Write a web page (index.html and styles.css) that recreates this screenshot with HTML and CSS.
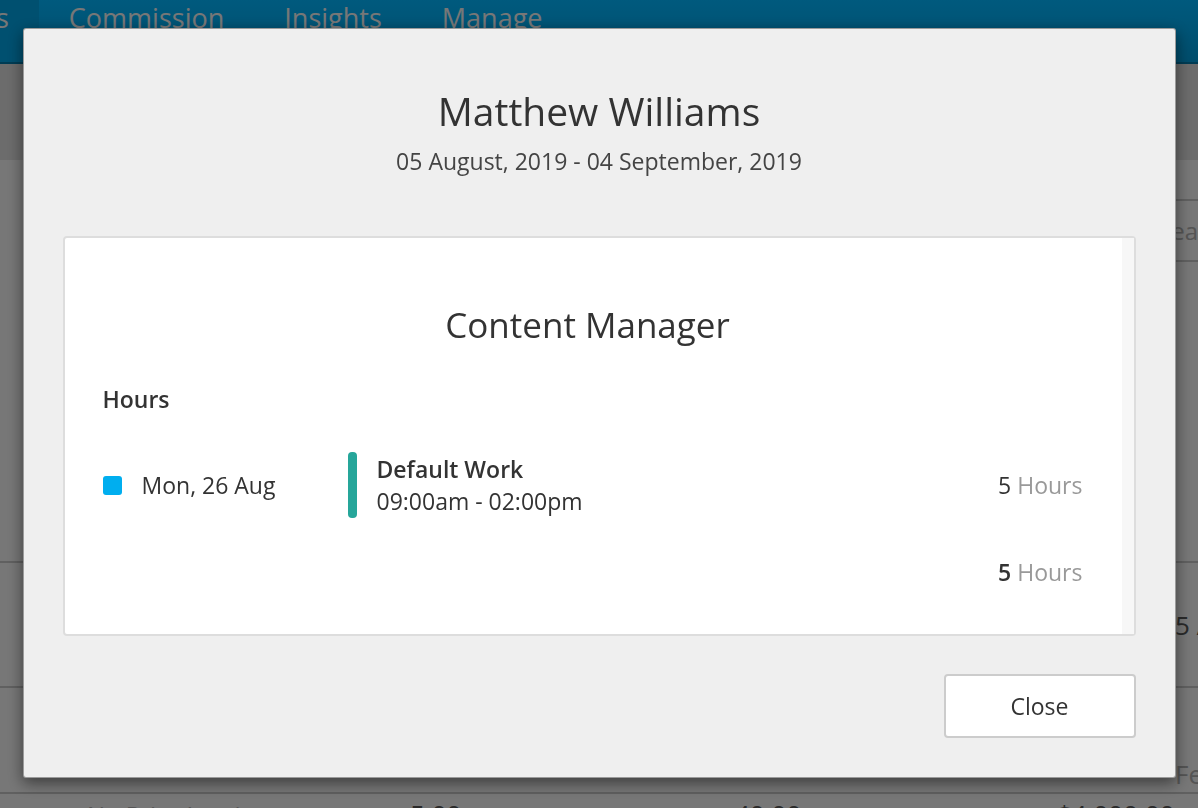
FILE: index.html
```html
<!DOCTYPE html>
<html lang="en">
<head>
  <meta charset="UTF-8" />
  <meta name="viewport" content="width=device-width, initial-scale=1.0"/>
  <title>Staff Hours | Matthew Williams</title>
  <link rel="stylesheet" href="styles.css">
</head>
<body>

  <!-- Page behind the dialog -->
  <nav class="topnav">
    <a class="tab active" href="#">Clients</a>
    <a class="tab" href="#">Commission</a>
    <a class="tab" href="#">Insights</a>
    <a class="tab" href="#">Manage</a>
  </nav>

  <div class="page-head"></div>

  <div class="toolbar">
    <div class="search-box">Search</div>
  </div>

  <div class="report">
    <div class="report-row tall"></div>
    <div class="report-row mid">
      <span class="cell c6 strong">5 / 40</span>
    </div>
    <div class="report-row short">
      <span class="cell c6 muted">Fees</span>
    </div>
    <div class="report-row plain">
      <span class="cell c2 muted">No Prior Invoices</span>
      <span class="cell c3 strong">5.00 <small>H</small></span>
      <span class="cell c4 strong">40.00 <small>H</small></span>
      <span class="cell c5 strong">$4,000.00</span>
    </div>
  </div>

  <!-- Hours dialog -->
  <div class="overlay">
    <div class="modal">
      <div class="modal-head">
        <h2 class="staff-name">Matthew Williams</h2>
        <p class="period">05 August, 2019 - 04 September, 2019</p>
      </div>

      <div class="role-card">
        <div class="role-body">
          <h3 class="role-title">Content Manager</h3>
          <h4 class="section-label">Hours</h4>

          <div class="shift-row">
            <div class="shift-date"><span class="dot"></span>Mon, 26 Aug</div>
            <div class="shift-info">
              <span class="bar"></span>
              <div>
                <div class="shift-name">Default Work</div>
                <div class="shift-time">09:00am - 02:00pm</div>
              </div>
            </div>
            <div class="shift-hours"><span class="num">5</span> Hours</div>
          </div>

          <div class="total-row"><span class="num bold">5</span> Hours</div>
        </div>
        <div class="scroll-track"></div>
      </div>

      <div class="modal-foot">
        <button class="btn-close">Close</button>
      </div>
    </div>
  </div>

</body>
</html>
```

FILE: styles.css
```css
body {
  font-family: "Open Sans", "Liberation Sans", sans-serif;
  margin: 0;
  background: #eeeeee;
  color: #333;
  overflow: hidden;
  height: 808px;
}

/* Page behind */
.topnav {
  height: 62px;
  background: linear-gradient(#00b4fc, #009ad8);
  border-bottom: 2px solid #0078a8;
  display: flex;
  margin-left: -106px;
}

.tab {
  font-size: 27px;
  line-height: 36px;
  color: #eeeeee;
  text-decoration: none;
  padding: 0 30px;
}

.tab.active {
  background: #00a0e0;
}

.page-head {
  height: 96px;
  background: #d8d8d8;
}

.toolbar {
  height: 103px;
  display: flex;
  justify-content: flex-end;
  align-items: flex-end;
}

.search-box {
  width: 120px;
  height: 59px;
  margin-right: -80px;
  margin-bottom: 1px;
  border-top: 2px solid #c0c0c0;
  border-bottom: 2px solid #c0c0c0;
  padding-left: 39px;
  font-size: 24px;
  line-height: 59px;
  color: #aaaaaa;
}

.report-row {
  display: grid;
  grid-template-columns: 87px 323px 325px 322px 118px 200px;
  align-items: center;
  border-bottom: 2px solid #c0c0c0;
  white-space: nowrap;
}

.report-row.tall { height: 298px; }
.report-row.mid { height: 123px; }
.report-row.short { height: 104px; align-items: end; }
.report-row.plain { border: none; padding-top: 2px; }

.cell { font-size: 26px; }
.c2 { grid-column: 2; font-size: 24px; }
.c3 { grid-column: 3; }
.c4 { grid-column: 4; }
.c5 { grid-column: 5; }
.c6 { grid-column: 6; }
.strong { color: #555; }
.muted { color: #aaaaaa; }
.cell small { font-size: 14px; color: #aaa; }

/* Dialog */
.overlay {
  position: fixed;
  top: 0;
  left: 0;
  right: 0;
  bottom: 0;
  background: rgba(0, 0, 0, 0.5);
  display: flex;
  justify-content: center;
  align-items: flex-start;
  padding-top: 28px;
}

.modal {
  width: 1073px;
  background: #efefef;
  border: 1px solid rgba(0, 0, 0, 0.35);
  border-radius: 3px;
  box-shadow: 0 5px 15px rgba(0, 0, 0, 0.5);
  padding: 0 39px 39px;
}

.modal-head {
  text-align: center;
  padding-top: 56px;
  padding-bottom: 59px;
}

.staff-name {
  font-size: 39px;
  line-height: 52px;
  font-weight: 400;
  margin: 0;
  color: #333;
}

.period {
  font-size: 23px;
  line-height: 31px;
  margin: 9px 0 0;
  color: #444;
}

.role-card {
  background: #fff;
  border: 2px solid #dddddd;
  border-radius: 4px;
  display: flex;
}

.role-body {
  flex: 1;
  padding: 63px 39px 46px 38px;
}

.scroll-track {
  width: 12px;
  background: #f7f7f7;
}

.role-title {
  text-align: center;
  font-size: 35px;
  line-height: 48px;
  font-weight: 400;
  margin: 0 0 35px;
  padding-right: 10px;
  color: #333;
}

.section-label {
  font-size: 23px;
  line-height: 31px;
  font-weight: 600;
  margin: 0 0 37px;
  color: #333;
}

.shift-row {
  display: flex;
  align-items: center;
  font-size: 23px;
}

.shift-date {
  width: 245px;
  display: flex;
  align-items: center;
  color: #333;
}

.dot {
  width: 19px;
  height: 19px;
  border-radius: 3px;
  background: #00aeef;
  margin-right: 20px;
}

.shift-info {
  flex: 1;
  display: flex;
  align-items: center;
}

.bar {
  width: 9px;
  height: 66px;
  border-radius: 4px;
  background: #26a69a;
  margin-right: 20px;
}

.shift-name {
  font-weight: 600;
  line-height: 32px;
}

.shift-time {
  line-height: 32px;
}

.shift-hours, .total-row {
  font-size: 23px;
  line-height: 31px;
  color: #999;
  text-align: right;
}

.total-row {
  margin-top: 39px;
}

.num {
  color: #333;
}

.num.bold {
  font-weight: 600;
}

.modal-foot {
  display: flex;
  justify-content: flex-end;
  margin-top: 38px;
}

.btn-close {
  width: 192px;
  height: 64px;
  background: #fff;
  border: 2px solid #cccccc;
  border-radius: 4px;
  font-family: inherit;
  font-size: 23px;
  color: #333;
  cursor: pointer;
}
```
